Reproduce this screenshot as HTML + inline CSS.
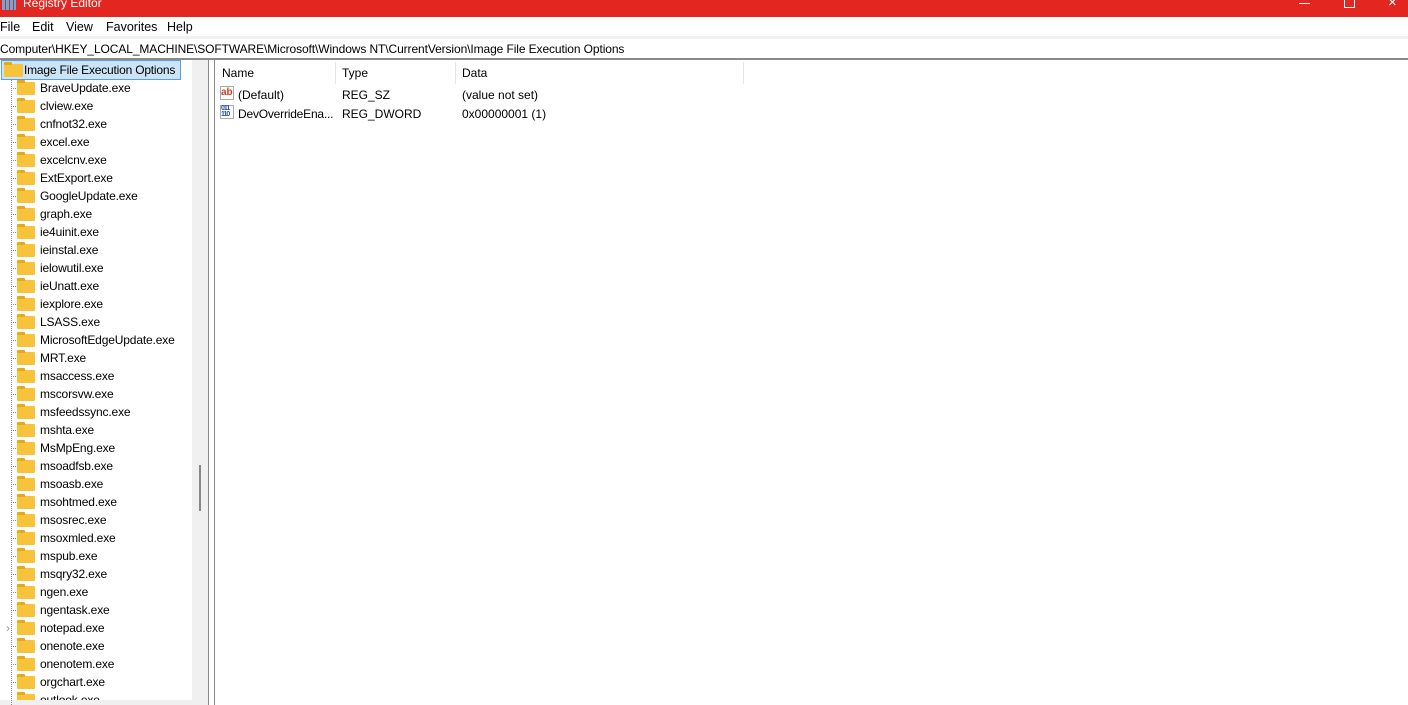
<html><head><style>
body{margin:0;width:1408px;height:705px;overflow:hidden;background:#fff;font-family:"Liberation Sans",sans-serif;font-size:12px;color:#000;position:relative}
.a{position:absolute}
.row{position:absolute;left:0;height:18px;line-height:18px;white-space:nowrap}
.f{position:absolute;left:17px;top:3px;width:18px;height:13px;background:#f7c33a;border-radius:1px}
.f:before{content:"";position:absolute;left:0;top:-2px;width:8px;height:3px;background:#e9a81c;border-radius:1px 1px 0 0}
.dl{position:absolute;left:11px;top:9px;width:5px;border-top:1px dotted #888}
.t{position:absolute;left:40px;letter-spacing:-0.15px}
</style></head><body>
<div class="a" style="left:0;top:0;width:1408px;height:17px;background:#e3261f"></div>
<div class="a" style="left:2px;top:-4px;width:14px;height:14px;background:repeating-linear-gradient(90deg,#6ad 0 3px,#e3261f 3px 4px)"></div>
<div class="a" style="left:23px;top:-4px;color:#fff;font-size:12px">Registry Editor</div>
<div class="a" style="left:1299px;top:3px;width:11px;border-top:1px solid #fff"></div>
<div class="a" style="left:1344px;top:-3px;width:9px;height:9px;border:1px solid #fff"></div>
<div class="a" style="left:1388px;top:-6px;color:#fff;font-size:15px">×</div>
<div class="a" style="left:0;top:20px;font-size:12.5px">File</div>
<div class="a" style="left:32px;top:20px;font-size:12.5px">Edit</div>
<div class="a" style="left:66px;top:20px;font-size:12.5px">View</div>
<div class="a" style="left:106px;top:20px;font-size:12.5px">Favorites</div>
<div class="a" style="left:167px;top:20px;font-size:12.5px">Help</div>
<div class="a" style="left:0;top:36px;width:1408px;height:3px;background:#f0f0f0"></div>
<div class="a" style="left:0;top:42px;font-size:12px;letter-spacing:-0.1px">Computer\HKEY_LOCAL_MACHINE\SOFTWARE\Microsoft\Windows NT\CurrentVersion\Image File Execution Options</div>
<div class="a" style="left:0;top:58px;width:1408px;height:2px;background:#8a8a8a"></div>
<div class="a" style="left:192px;top:60px;width:16px;height:645px;background:#f0f0f0"></div>
<div class="a" style="left:199px;top:465px;width:2px;height:46px;background:#888"></div>
<div class="a" style="left:0;top:700px;width:192px;height:5px;background:#f0f0f0"></div>
<div class="a" style="left:208px;top:60px;width:1px;height:645px;background:#8a8a8a"></div>
<div class="a" style="left:214px;top:60px;width:1px;height:645px;background:#8a8a8a"></div>
<div class="a" style="left:11px;top:79px;height:626px;border-left:1px dotted #888"></div>
<div class="row" style="top:60px;left:1px;width:178px;border:1px solid #5aa0e0;background:#cce4f7"><div class="f" style="left:2px;top:3px;width:19px"></div><span style="position:absolute;left:22px;font-size:12px;letter-spacing:-0.2px">Image File Execution Options</span></div>
<div id="tree"></div>
<div class="a" style="left:335px;top:62px;width:1px;height:22px;background:#e5e5e5"></div>
<div class="a" style="left:455px;top:62px;width:1px;height:22px;background:#e5e5e5"></div>
<div class="a" style="left:743px;top:62px;width:1px;height:22px;background:#e5e5e5"></div>
<div class="a" style="left:222px;top:66px">Name</div>
<div class="a" style="left:342px;top:66px">Type</div>
<div class="a" style="left:462px;top:66px">Data</div>
<div class="a" style="left:220px;top:86px;width:14px;height:14px;border:1px solid #aaa;box-sizing:border-box;color:#d04020;font-size:10px;font-weight:bold;line-height:11px">ab</div>
<div class="a" style="left:238px;top:88px">(Default)</div><div class="a" style="left:342px;top:88px">REG_SZ</div><div class="a" style="left:462px;top:88px">(value not set)</div>
<div class="a" style="left:220px;top:105px;width:14px;height:14px;border:1px solid #aaa;box-sizing:border-box;color:#2050b0;font-size:7px;font-weight:bold;line-height:6px;letter-spacing:-1px">011<br>110</div>
<div class="a" style="left:238px;top:107px;letter-spacing:-0.2px">DevOverrideEna...</div><div class="a" style="left:342px;top:107px">REG_DWORD</div><div class="a" style="left:462px;top:107px">0x00000001 (1)</div>
<script>
var n="BraveUpdate.exe clview.exe cnfnot32.exe excel.exe excelcnv.exe ExtExport.exe GoogleUpdate.exe graph.exe ie4uinit.exe ieinstal.exe ielowutil.exe ieUnatt.exe iexplore.exe LSASS.exe MicrosoftEdgeUpdate.exe MRT.exe msaccess.exe mscorsvw.exe msfeedssync.exe mshta.exe MsMpEng.exe msoadfsb.exe msoasb.exe msohtmed.exe msosrec.exe msoxmled.exe mspub.exe msqry32.exe ngen.exe ngentask.exe notepad.exe onenote.exe onenotem.exe orgchart.exe outlook.exe".split(" ");
var h="";n.forEach(function(x,i){var y=79+i*18;h+='<div class="row" style="top:'+y+'px;width:192px;overflow:hidden;height:'+Math.min(18,700-y)+'px">'+(x=="notepad.exe"?'<span style="position:absolute;left:6px;color:#999">›</span>':'<div class="dl"></div>')+'<div class="f"></div><span class="t">'+x+'</span></div>'});
document.getElementById("tree").innerHTML=h;
</script>
</body></html>
